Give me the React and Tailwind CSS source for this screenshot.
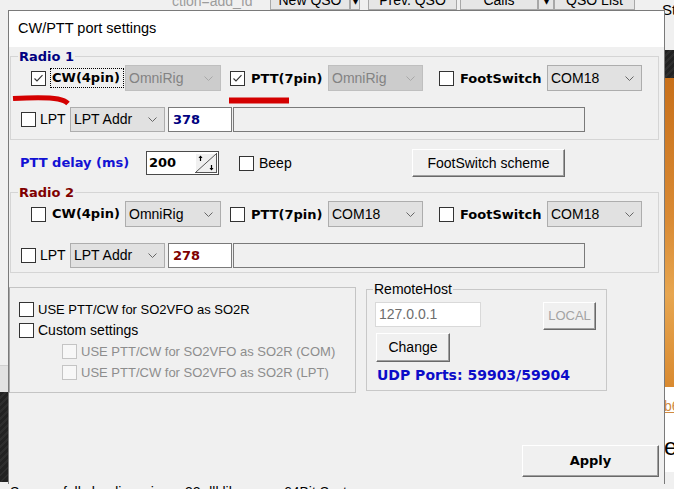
import React from "react";

function Check({ checked, disabled }) {
  return (
    <span
      className={
        "flex-none w-[15px] h-[15px] border flex items-center justify-center " +
        (disabled ? "border-[#c4c4c4] bg-[#f7f7f7]" : "border-[#333333] bg-white")
      }
    >
      {checked && (
        <svg width="13" height="13" viewBox="0 0 13 13">
          <path d="M2.5 6.5 L5 9 L10.5 3.2" fill="none" stroke="#333" strokeWidth="1.1" />
        </svg>
      )}
    </span>
  );
}

function Combo({ text, w, disabled }) {
  return (
    <div
      className={
        "flex-none flex items-center justify-between h-[26px] border pl-[3px] pr-[7px] text-[14px] " +
        w +
        (disabled
          ? " bg-[#cccccc] border-[#bfbfbf] text-[#838383]"
          : " bg-[#e1e1e1] border-[#adadad] text-black")
      }
    >
      <span>{text}</span>
      <svg width="9" height="5" viewBox="0 0 9 5">
        <polyline
          points="0.5,0.5 4.5,4.5 8.5,0.5"
          fill="none"
          stroke={disabled ? "#a8a8a8" : "#666"}
          strokeWidth="1"
        />
      </svg>
    </div>
  );
}

function Bold({ children, className }) {
  return (
    <span className={"font-['DejaVu_Sans',sans-serif] font-bold text-[13px] " + (className || "")}>
      {children}
    </span>
  );
}

function BtnClassic({ children, className }) {
  return (
    <div
      className={
        "flex-none flex items-center justify-center bg-[#f0f0f0] border border-t-white border-l-white border-r-[#696969] border-b-[#696969] shadow-[inset_-1px_-1px_0_#a0a0a0] " +
        className
      }
    >
      {children}
    </div>
  );
}

function RadioGroup({ title, color, focus, cw, ptt, lpt, h }) {
  return (
    <div className={"relative ml-[1px] w-[649px] border border-[#d5d5d5] flex-none " + h}>
      <span
        className="absolute left-[7px] top-[-8px] px-[1px] bg-[#f0f0f0] leading-[16px] font-['DejaVu_Sans',sans-serif] font-bold text-[13px]"
        style={{ color }}
      >
        {title}
      </span>
      <div className="flex items-center h-[26px] mt-[8px] pl-[20px]">
        <Check checked={cw.checked} />
        <span
          className={
            "flex-none ml-[4px] w-[74px] h-[20px] flex items-center pl-[1px] border border-dotted " +
            (focus ? "border-black" : "border-transparent")
          }
        >
          <Bold>CW(4pin)</Bold>
        </span>
        <Combo text={cw.combo} w="w-[96px] ml-[1px]" disabled={cw.disabled} />
        <span className="ml-[9px]">
          <Check checked={ptt.checked} />
        </span>
        <span className="flex-none ml-[4px] w-[77px] pl-[2px]">
          <Bold>PTT(7pin)</Bold>
        </span>
        <Combo text={ptt.combo} w="w-[95px] ml-[2px]" disabled={ptt.disabled} />
        <span className="ml-[16px]">
          <Check />
        </span>
        <span className="flex-none ml-[4px] w-[88px] pl-[2px]">
          <Bold>FootSwitch</Bold>
        </span>
        <Combo text="COM18" w="w-[95px] ml-[1px]" />
      </div>
      <div className="flex items-center h-[25px] mt-[16px] pl-[10px]">
        <Check />
        <span className="flex-none ml-[4px] w-[30px] text-[14px]">LPT</span>
        <div className="flex-none flex items-center justify-between h-[25px] w-[95px] border border-[#adadad] bg-[#e1e1e1] pl-[3px] pr-[7px] text-[14px]">
          <span>LPT Addr</span>
          <svg width="9" height="5" viewBox="0 0 9 5">
            <polyline points="0.5,0.5 4.5,4.5 8.5,0.5" fill="none" stroke="#666" strokeWidth="1" />
          </svg>
        </div>
        <div className="flex-none ml-[3px] w-[64px] h-[25px] border border-[#7a7a7a] bg-white flex items-center pl-[4px]">
          <Bold>
            <span style={{ color }}>{lpt}</span>
          </Bold>
        </div>
        <div className="flex-none ml-[1px] w-[352px] h-[25px] border border-[#7a7a7a]" />
      </div>
    </div>
  );
}

function SpinGlyph() {
  return (
    <svg width="22" height="20" viewBox="0 0 22 20">
      <rect x="0" y="0" width="22" height="20" fill="#f0f0f0" />
      <line x1="0" y1="0.5" x2="22" y2="0.5" stroke="#fff" />
      <line x1="0.5" y1="0" x2="0.5" y2="20" stroke="#fff" />
      <line x1="0" y1="19.5" x2="22" y2="19.5" stroke="#555" />
      <line x1="21.5" y1="0" x2="21.5" y2="20" stroke="#555" />
      <line x1="1" y1="19" x2="21" y2="1" stroke="#555" strokeWidth="1" />
      <path d="M5.5 8 V3" stroke="#000" strokeWidth="1.2" />
      <path d="M3.5 5 L5.5 2.5 L7.5 5 Z" fill="#000" />
      <path d="M16.5 12 V17" stroke="#000" strokeWidth="1.2" />
      <path d="M14.5 15 L16.5 17.5 L18.5 15 Z" fill="#000" />
    </svg>
  );
}

function TopButton({ children, className }) {
  return (
    <div
      className={
        "flex-none h-[25px] flex items-end justify-center pb-[2px] bg-[#e6e6e6] border border-[#a8a8a8] text-[14px] leading-[14px] " +
        className
      }
    >
      {children}
    </div>
  );
}

export default function App() {
  return (
    <div className="relative w-[674px] h-[489px] overflow-hidden bg-[#f0f0f0] font-['Liberation_Sans',Arial,sans-serif] text-black">
      {/* background window behind the dialog */}
      <div className="absolute left-0 top-[-15px] w-[674px] h-[25px] flex items-end">
        <span className="flex-none ml-[172px] w-[98px] text-[14px] leading-[14px] pb-[2px] text-[#9c9c9c] overflow-hidden whitespace-nowrap">
          ction=add_fd
        </span>
        <TopButton className="w-[80px]">New QSO</TopButton>
        <TopButton className="w-[10px] text-[8px]">▾</TopButton>
        <TopButton className="w-[89px] ml-[8px]">Prev. QSO</TopButton>
        <TopButton className="w-[78px] ml-[3px]">Calls</TopButton>
        <TopButton className="w-[16px] text-[8px]">▾</TopButton>
        <TopButton className="w-[81px]">QSO List</TopButton>
      </div>
      <span className="absolute left-[662px] top-[2px] text-[15px] leading-[16px]">St</span>

      <div className="absolute left-0 top-[365px] w-[8px] h-[27px] bg-[#e2e2e2] border-t border-[#d0d0d0]" />
      <div className="absolute left-0 top-[392px] w-[8px] h-[90px] bg-[repeating-linear-gradient(135deg,#222_0px,#222_3px,#2e2e2e_3px,#2e2e2e_5px)]" />

      <div className="absolute left-[665px] top-[50px] w-[9px] h-[28px] bg-[repeating-linear-gradient(135deg,#222_0px,#222_3px,#2e2e2e_3px,#2e2e2e_5px)]" />
      <div className="absolute left-[665px] top-[78px] w-[9px] h-[309px] bg-[linear-gradient(180deg,#c8701a_0%,#d98a34_45%,#e7a650_70%,#d98a30_100%)]" />
      <div className="absolute left-[665px] top-[387px] w-[9px] h-[85px] bg-white" />
      <span className="absolute left-[664px] top-[398px] text-[14px] leading-[16px] text-[#d08a40] underline">b6</span>
      <span className="absolute left-[664px] top-[434px] text-[24px] leading-[26px]">e</span>

      <span className="absolute left-[10px] top-[484px] text-[14px] leading-[16px] whitespace-nowrap">
        Successfully loading winmm32.dll library on 64Bit System
      </span>

      {/* dialog */}
      <div className="absolute left-[8px] top-[10px] w-[657px] h-[474px] border-x border-t border-[#7a7a7a] bg-[#f0f0f0] flex flex-col">
        <div className="flex-none h-[36px] bg-white flex items-center pl-[9px] text-[14.5px]">
          CW/PTT port settings
        </div>

        <div className="mt-[9px]">
          <RadioGroup
            title="Radio 1"
            color="#000080"
            focus
            h="h-[84px]"
            cw={{ checked: true, combo: "OmniRig", disabled: true }}
            ptt={{ checked: true, combo: "OmniRig", disabled: true }}
            lpt="378"
          />
        </div>

        <div className="flex items-center h-[28px] mt-[9px] pl-[11px]">
          <span className="flex-none w-[126px] font-['DejaVu_Sans',sans-serif] font-bold text-[13px] text-[#1212d4]">
            PTT delay (ms)
          </span>
          <div className="flex-none w-[73px] h-[24px] border border-[#4a4a4a] bg-white flex items-center justify-between pl-[2px] pr-[1px]">
            <Bold>200</Bold>
            <SpinGlyph />
          </div>
          <span className="ml-[20px]">
            <Check />
          </span>
          <span className="flex-none ml-[5px] w-[153px] text-[14px]">Beep</span>
          <BtnClassic className="w-[153px] h-[28px] text-[14px]">FootSwitch scheme</BtnClassic>
        </div>

        <div className="mt-[15px]">
          <RadioGroup
            title="Radio 2"
            color="#800000"
            h="h-[81px]"
            cw={{ checked: false, combo: "OmniRig" }}
            ptt={{ checked: false, combo: "COM18" }}
            lpt="278"
          />
        </div>

        <div className="flex items-start mt-[14px]">
          <div className="flex-none w-[347px] h-[106px] border border-[#c4c4c4] border-l-[#a8a8a8] pt-[11px] pl-[9px]">
            <div className="flex items-center h-[21px]">
              <Check />
              <span className="ml-[4px] text-[13px]">USE PTT/CW for SO2VFO as SO2R</span>
            </div>
            <div className="flex items-center h-[21px]">
              <Check />
              <span className="ml-[4px] text-[14px]">Custom settings</span>
            </div>
            <div className="flex items-center h-[21px] pl-[43px]">
              <Check disabled />
              <span className="ml-[4px] text-[13px] text-[#8d8d8d]">USE PTT/CW for SO2VFO as SO2R (COM)</span>
            </div>
            <div className="flex items-center h-[21px] pl-[43px]">
              <Check disabled />
              <span className="ml-[4px] text-[13px] text-[#8d8d8d]">USE PTT/CW for SO2VFO as SO2R (LPT)</span>
            </div>
          </div>

          <div className="relative flex-none ml-[10px] mt-[2px] w-[241px] h-[102px] border border-[#c8c8c8]">
            <span className="absolute left-[6px] top-[-9px] px-[1px] bg-[#f0f0f0] text-[14px] leading-[16px]">
              RemoteHost
            </span>
            <div className="flex items-start mt-[12px] ml-[8px]">
              <div className="flex-none w-[106px] h-[25px] border border-[#d9d9d9] bg-white flex items-center pl-[3px] text-[14px] text-[#6d6d6d]">
                127.0.0.1
              </div>
              <BtnClassic className="ml-[62px] w-[53px] h-[28px] text-[13px] text-[#a3a3a3]">LOCAL</BtnClassic>
            </div>
            <BtnClassic className="mt-[3px] ml-[9px] w-[74px] h-[29px] text-[14px]">Change</BtnClassic>
            <div className="mt-[3px] ml-[10px] leading-[20px] font-['DejaVu_Sans',sans-serif] font-bold text-[14px] text-[#0c0cc8]">
              UDP Ports: 59903/59904
            </div>
          </div>
        </div>

        <div className="flex justify-end pr-[5px] mt-[52px]">
          <BtnClassic className="w-[137px] h-[32px]">
            <Bold>Apply</Bold>
          </BtnClassic>
        </div>
      </div>

      {/* red annotation marks */}
      <svg className="absolute left-0 top-0 pointer-events-none" width="674" height="489">
        <path d="M13 98.5 C30 97.5 48 97 58 99 C63 100 66 101.5 68 103.5" fill="none" stroke="#d40000" strokeWidth="5" />
        <path d="M229 100.5 L289 100.5" fill="none" stroke="#d40000" strokeWidth="6" />
      </svg>
    </div>
  );
}
